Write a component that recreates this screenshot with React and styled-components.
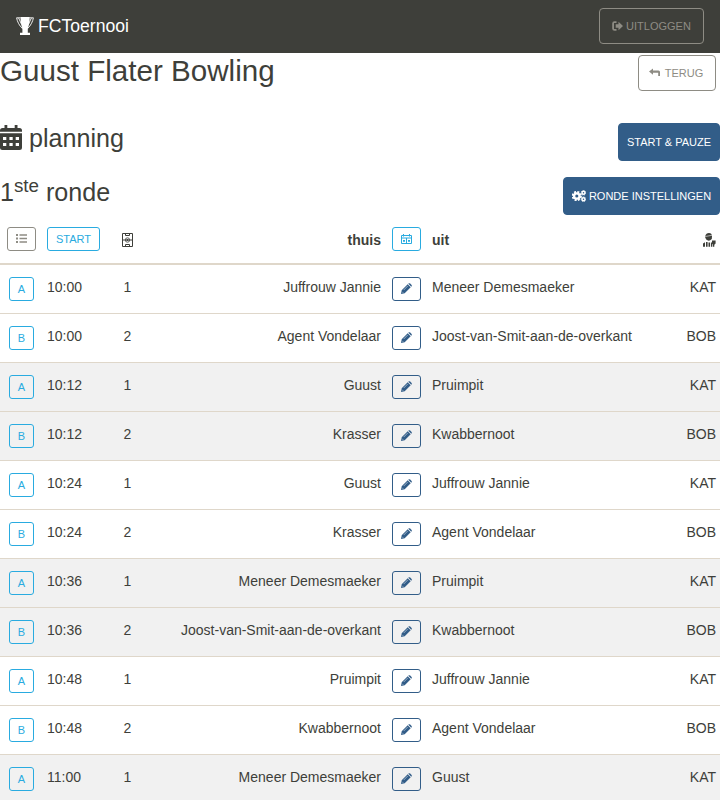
import React from "react";
import styled, { createGlobalStyle } from "styled-components";

const GlobalStyle = createGlobalStyle`
  * { box-sizing: border-box; }
  html, body { margin: 0; padding: 0; }
  html { height: 100%; overflow: hidden; }
  body { height: 800px; overflow: hidden; background: #fff; color: #3e3f3a;
    font: 14px/21px "Liberation Sans", Arial, sans-serif; }
`;

const Navbar = styled.nav`
  height: 53px;
  padding: 0 16px 1px;
  background: #3e3f3a;
  display: flex;
  align-items: center;
  justify-content: space-between;
`;
const Brand = styled.div`
  display: flex;
  align-items: center;
  gap: 4px;
  color: #fff;
  font-size: 17.6px;
  line-height: 26px;
`;
const Button = styled.button`
  display: inline-flex;
  align-items: center;
  justify-content: center;
  gap: ${(p) => p.$gap ?? 3}px;
  flex: none;
  width: ${(p) => p.$w}px;
  height: ${(p) => p.$h ?? 36}px;
  margin: 0;
  padding: 0 ${(p) => p.$right ?? 0}px ${(p) => p.$bottom ?? 0}px 0;
  border: 1px solid ${(p) => p.$color};
  border-radius: ${(p) => p.$radius ?? 4}px;
  background: ${(p) => (p.$solid ? p.$color : "transparent")};
  color: ${(p) => (p.$solid ? "#fff" : p.$color)};
  font: 11px/16px "Liberation Sans", Arial, sans-serif;
  white-space: nowrap;
`;
const SmallButton = styled(Button).attrs({ $h: 24, $radius: 3 })``;
const Heading = styled.div`
  display: flex;
  justify-content: space-between;
  height: ${(p) => p.$h}px;
  padding: 2px ${(p) => p.$right ?? 0}px 0 0;
`;
const Title = styled.h1`
  margin: 0;
  font-size: 29.6px;
  font-weight: 400;
  line-height: 32px;
`;
const Subtitle = styled.h2`
  display: flex;
  align-items: center;
  gap: 7px;
  height: 30px;
  margin: 0;
  font-size: 25.1px;
  font-weight: 400;
  line-height: 30px;
`;
const Round = styled.span`
  sup { position: relative; top: -9px; font-size: 18.8px; line-height: 0; vertical-align: baseline; }
`;
const Row = styled.div`
  display: grid;
  grid-template-columns: 47px 53px 55px 226px 51px 1fr 80px;
  height: 49px;
  padding: 12px 4px 0 0;
  border-bottom: 1px solid #dfd7ca;
  background: ${(p) => (p.$shade ? "#f1f1f1" : "#fff")};
  overflow: hidden;
`;
const HeadRow = styled(Row)`
  height: 50px;
  border-bottom-width: 2px;
  font-weight: 700;
`;
const Cell = styled.div`
  display: flex;
  align-items: flex-start;
  justify-content: ${(p) => p.$align ?? "flex-start"};
  padding-left: ${(p) => p.$left ?? 0}px;
  padding-top: ${(p) => p.$top ?? 0}px;
  white-space: nowrap;
`;
const Svg = styled.svg`
  display: block;
  flex: none;
  fill: currentColor;
`;

const Icon = ({ w, h, box, children }) => (
  <Svg width={w} height={h} viewBox={box ?? `0 0 ${w} ${h}`} aria-hidden="true">{children}</Svg>
);

const Calendar = () => (
  <Icon w={22} h={26}>
    <path d="M4.500 0h2.800v3h7.400V0h2.800v3h2Q22 3 22 5.500V6.700H0V5.500Q0 3 2.500 3h2z" />
    <path fillRule="evenodd" d="M0 8.200h22v14.300Q22 25 19.500 25h-17Q0 25 0 22.500zM3 12v3h3.300v-3zM9.400 12v3h3.300v-3zM15.700 12v3H19v-3zM3 18v3h3.300v-3zM9.400 18v3h3.300v-3zM15.700 18v3H19v-3z" />
  </Icon>
);
const Trophy = () => (
  <Icon w={18} h={18}>
    <path d="M4.500 0h9.200c0 4.500-.6 8.500-1.900 11.500v4.300H14V18H4v-2.200h2.400v-4.300C5.100 8.500 4.500 4.500 4.500 0z" />
    <path d="M4.500 .8H.6c.6 3.500 2.400 7.500 6 11M13.500 .8h3.900c-.6 3.500-2.400 7.500-6 11M2.600 1l3 6.500M15.400 1l-3 6.500" fill="none" stroke="currentColor" strokeWidth=".9" />
  </Icon>
);
const LogOut = () => (
  <Icon w={11} h={10}>
    <path d="M4.500 .3v1.800H2v5.800h2.500v1.800H2.500Q.2 9.700.2 7.500v-5Q.2.300 2.500.3z" />
    <path d="M3.700 3.200h2.800V.7L11 5 6.500 9.300V6.800H3.700z" />
  </Icon>
);
const Back = () => (
  <Icon w={11} h={10}>
    <path d="M0 3.500 4 .5v2h5.500Q11 2.500 11 4v4H9.200V4.700H4v2z" />
  </Icon>
);
const Cogs = () => (
  <Icon w={14} h={12}>
    <circle cx="4.800" cy="6" r="2.700" fill="none" stroke="currentColor" strokeWidth="2.300" />
    <circle cx="4.800" cy="6" r="4.100" fill="none" stroke="currentColor" strokeWidth="2" strokeDasharray="2 1.220" />
    <circle cx="11.500" cy="2.800" r="1.500" fill="none" stroke="currentColor" strokeWidth="1.500" />
    <circle cx="11.500" cy="2.800" r="2.300" fill="none" stroke="currentColor" strokeWidth=".8" strokeDasharray="1 .8" />
    <circle cx="11.500" cy="9.200" r="1.500" fill="none" stroke="currentColor" strokeWidth="1.500" />
    <circle cx="11.500" cy="9.200" r="2.300" fill="none" stroke="currentColor" strokeWidth=".8" strokeDasharray="1 .8" />
  </Icon>
);
const List = () => (
  <Icon w={11} h={9}>
    <path d="M0 0h2v2H0zM0 3.500h2v2H0zM0 7h2v2H0zM3.500 .2h7.500v1.600H3.500zM3.500 3.700h7.500v1.600H3.500zM3.500 7.200h7.500v1.600H3.500z" />
  </Icon>
);
const Field = () => (
  <Icon w={11} h={14}>
    <path d="M.5 .5h10v13H.5zM1 7h9M3.500 .5v2h4v-2M3.500 13.500v-2h4v2" fill="none" stroke="currentColor" />
    <circle cx="5.500" cy="7" r="2.200" fill="none" stroke="currentColor" strokeWidth=".8" />
    <circle cx="5.500" cy="7" r="1" />
  </Icon>
);
const Agenda = () => (
  <Icon w={11} h={10}>
    <path d="M.5 1.500h10v8H.5zM.5 4h10M5.500 4v5.500M2.500 0v2.500M8.500 0v2.500" fill="none" stroke="currentColor" />
    <path d="M2 6h2v1.700H2zM7 6h2v1.700H7z" />
  </Icon>
);
const Pencil = () => (
  <Icon w={11} h={11}>
    <path d="M0 11 .7 7.300 6.700 1.300 9.700 4.300 3.700 10.300zM7.400.6Q8.300-.3 9.200.6l1.200 1.200q.9.9 0 1.800l-.1.100-3-3z" />
    <path d="M2.700 7 6.800 2.900M1.200 8.800l1 1" fill="none" stroke="#fff" strokeWidth=".5" />
  </Icon>
);
const Referee = () => (
  <Icon w={13} h={14}>
    <path d="M2.300 3Q3 0 6 0q2.800.2 3 3L8.800 6Q6 9 3.200 6.600L2.200 4.500zM0 13.700V10.500l2-1.200v4.400zM3 9h1.600v4.700H3zM5.500 9.500H7v4.200H5.500zM7.900 9.500h1.300v4.200H7.900z" />
    <path d="M9 7.500h3.600v3l-1.300 1.300v1.900H9.800v-2.200L9 10.800z" />
    <path d="M2.300 3.500 9 2.300" fill="none" stroke="#fff" strokeWidth=".6" />
  </Icon>
);

const matches = [
  ["10:00", "Juffrouw Jannie", "Meneer Demesmaeker"],
  ["10:00", "Agent Vondelaar", "Joost-van-Smit-aan-de-overkant"],
  ["10:12", "Guust", "Pruimpit"],
  ["10:12", "Krasser", "Kwabbernoot"],
  ["10:24", "Guust", "Juffrouw Jannie"],
  ["10:24", "Krasser", "Agent Vondelaar"],
  ["10:36", "Meneer Demesmaeker", "Pruimpit"],
  ["10:36", "Joost-van-Smit-aan-de-overkant", "Kwabbernoot"],
  ["10:48", "Pruimpit", "Juffrouw Jannie"],
  ["10:48", "Kwabbernoot", "Agent Vondelaar"],
  ["11:00", "Meneer Demesmaeker", "Guust"],
];

export default function App() {
  return (
    <>
      <GlobalStyle />
      <Navbar>
        <Brand><Trophy />FCToernooi</Brand>
        <Button $w={105} $color="#8e8c84"><LogOut />UITLOGGEN</Button>
      </Navbar>
      <main>
        <Heading $h={68} $right={4}>
          <Title>Guust Flater Bowling</Title>
          <Button $w={78} $color="#8e8c84" $gap={5} $right={2}><Back />TERUG</Button>
        </Heading>
        <Heading $h={54}>
          <Subtitle><Calendar />planning</Subtitle>
          <Button $w={102} $h={38} $color="#325d88" $solid>START &amp; PAUZE</Button>
        </Heading>
        <Heading $h={40}>
          <Subtitle><Round>1<sup>ste</sup> ronde</Round></Subtitle>
          <Button $w={157} $h={38} $color="#325d88" $solid><Cogs />RONDE INSTELLINGEN</Button>
        </Heading>
        <HeadRow>
          <Cell $left={7}><SmallButton $w={29} $color="#8e8c84" $bottom={1}><List /></SmallButton></Cell>
          <Cell><SmallButton $w={53} $color="#29abe0">START</SmallButton></Cell>
          <Cell $align="center" $top={6}><Field /></Cell>
          <Cell $align="flex-end" $top={3}>thuis</Cell>
          <Cell $left={11}><SmallButton $w={29} $color="#29abe0" $bottom={1}><Agenda /></SmallButton></Cell>
          <Cell $top={3}>uit</Cell>
          <Cell $align="flex-end" $top={6}><Referee /></Cell>
        </HeadRow>
        {matches.map(([time, home, away], i) => (
          <Row key={i} $shade={i % 4 > 1}>
            <Cell $left={9}><SmallButton $w={25} $color="#29abe0">{i % 2 ? "B" : "A"}</SmallButton></Cell>
            <Cell>{time}</Cell>
            <Cell $align="center">{(i % 2) + 1}</Cell>
            <Cell $align="flex-end">{home}</Cell>
            <Cell $left={11}><SmallButton $w={29} $color="#325d88" $bottom={2}><Pencil /></SmallButton></Cell>
            <Cell>{away}</Cell>
            <Cell $align="flex-end">{i % 2 ? "BOB" : "KAT"}</Cell>
          </Row>
        ))}
      </main>
    </>
  );
}
